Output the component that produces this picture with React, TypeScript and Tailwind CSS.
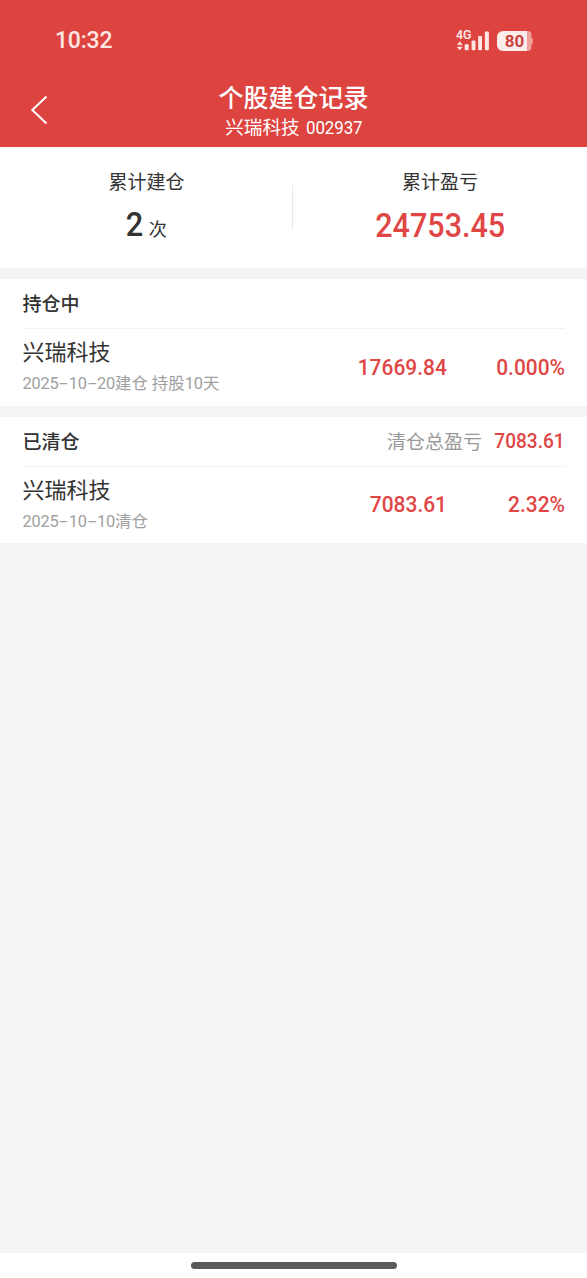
import { Fragment } from 'react';

const records = [
  {
    title: '持仓中',
    total: null,
    name: '兴瑞科技',
    date: '2025-10-20',
    note: '建仓 持股10天',
    profit: '17669.84',
    rate: '0.000%',
  },
  {
    title: '已清仓',
    total: '7083.61',
    name: '兴瑞科技',
    date: '2025-10-10',
    note: '清仓',
    profit: '7083.61',
    rate: '2.32%',
  },
];

function StatusBar() {
  return (
    <div className="flex h-[81px] items-center justify-between pl-[55px] pr-[53px] text-[#fde6e4]">
      <span className="text-[23px] font-medium leading-none tracking-[-0.2px]">10:32</span>
      <div className="flex items-center gap-[7px]">
        {/* Signal */}
        <svg width="34" height="24" viewBox="0 0 34 24" fill="currentColor">
          <text x="0" y="9.7" fontSize="12" fontWeight="600" textLength="15.5" lengthAdjust="spacingAndGlyphs">4G</text>
          <path d="M1.300 15.700 3.800 12.800 6.300 15.700ZM1.300 18 3.800 20.900 6.300 18Z" stroke="currentColor" strokeWidth="0.5" />
          <rect x="8.7" y="15.2" width="4" height="6" rx="1" />
          <rect x="15.6" y="11.5" width="3.9" height="9.7" rx="1" />
          <rect x="22.1" y="7" width="3.9" height="14.2" rx="1" />
          <rect x="28.9" y="2.5" width="4" height="18.7" rx="1" />
        </svg>
        {/* Battery */}
        <svg width="37" height="20" viewBox="0 0 37 20">
          <path d="M29 0h1.5a4 4 0 0 1 4 4v2.5c1 .7 1.5 2 1.5 3.5s-.5 2.8-1.500 3.5V16a4 4 0 0 1-4 4H29Z" fill="#ef9e9a" />
          <path d="M6 0H30V20H6a6 6 0 0 1-6-6V6a6 6 0 0 1 6-6Z" fill="#fdeceb" />
          <text x="17.500" y="15.800" textAnchor="middle" fontSize="17" fontWeight="700" fill="#c9423d">80</text>
        </svg>
      </div>
    </div>
  );
}

function DateText({ value }: { value: string }) {
  return (
    <span className="tracking-[-0.25px]">
      {value.split('-').map((part, i) => (
        <Fragment key={i}>
          {i > 0 && <span className="inline-block w-[10.4px] scale-x-[1.9] text-center tracking-normal">-</span>}
          {part}
        </Fragment>
      ))}
    </span>
  );
}

export default function App() {
  return (
    <div className="flex h-[1278px] w-[587px] flex-col bg-[#f4f4f4] font-[Roboto,'Noto_Sans_CJK_SC',sans-serif] text-[#333]">
      <header className="h-[147px] bg-[#dd443f]">
        <StatusBar />
        <div className="grid h-[66px] grid-cols-[80px_1fr_80px] text-white">
          <svg className="ml-[28px] mt-[13px]" width="22" height="32" viewBox="0 0 22 32" fill="none" stroke="currentColor" strokeWidth="2">
            <path d="M18.500 2.500 4.300 16 18.500 29.500" />
          </svg>
          <div className="flex flex-col items-center">
            <h1 className="mt-[2px] text-[25px] font-medium leading-[32px]">个股建仓记录</h1>
            <p className="mt-px flex text-[18.600px] leading-[24px]">
              兴瑞科技
              <span className="ml-[6px] -mr-[6px] inline-block origin-left scale-x-[0.91] tracking-[-0.1px]">002937</span>
            </p>
          </div>
        </div>
      </header>

      {/* Totals */}
      <section className="grid h-[121px] grid-cols-[292px_1px_1fr] bg-white text-center">
        <div className="pt-[23px]">
          <p className="pl-px text-[19px] leading-[26px]">累计建仓</p>
          <p className="flex items-baseline justify-center gap-[5px] pt-[9px] leading-[40px]">
            <span className="inline-block scale-x-[0.93] text-[33px] font-medium tracking-[-0.5px]">2</span>
            <span className="text-[18px]">次</span>
          </p>
        </div>
        <div className="mt-[38px] h-[44px] bg-[#e9e9e9]" />
        <div className="pt-[23px]">
          <p className="text-[19px] leading-[26px]">累计盈亏</p>
          <p className="pt-[10px] text-[33px] font-medium leading-[40px] text-[#df4645]">
            <span className="inline-block scale-x-[0.925]">24753.45</span>
          </p>
        </div>
      </section>

      {records.map((r) => (
        <section key={r.title} className="mt-[11px] h-[126.500px] bg-white px-[22.500px]">
          <div className="flex h-[50px] items-center justify-between border-b border-[#f1f1f1]">
            <h2 className="pt-[2px] text-[19px] font-medium leading-none">{r.title}</h2>
            {r.total && (
              <p className="flex items-center text-[19px] leading-none text-[#999]">
                <span className="pt-[2px]">清仓总盈亏</span>
                <span className="ml-[7px] inline-block origin-right scale-x-[0.93] text-[20.500px] font-medium text-[#df4645]">
                  {r.total}
                </span>
              </p>
            )}
          </div>
          <div className="grid grid-cols-[1fr_118px] items-center">
            <div className="flex items-center justify-between">
              <div className="pt-[9px]">
                <h3 className="text-[22px] leading-[30px]">{r.name}</h3>
                <p className="mt-[4px] text-[16.400px] leading-[24px] text-[#a0a0a0]">
                  <DateText value={r.date} />
                  {r.note}
                </p>
              </div>
              <p className="origin-right scale-x-[0.93] pt-[9px] text-[22.500px] font-medium leading-none text-[#df4645]">
                {r.profit}
              </p>
            </div>
            <p className="origin-right scale-x-[0.93] pt-[9px] text-right text-[22.500px] font-medium leading-none text-[#df4645]">
              {r.rate}
            </p>
          </div>
        </section>
      ))}

      <footer className="mt-auto flex h-[25px] justify-center bg-white pt-[9px]">
        <div className="h-[7px] w-[206px] rounded-full bg-[#5b5b5b]" />
      </footer>
    </div>
  );
}
